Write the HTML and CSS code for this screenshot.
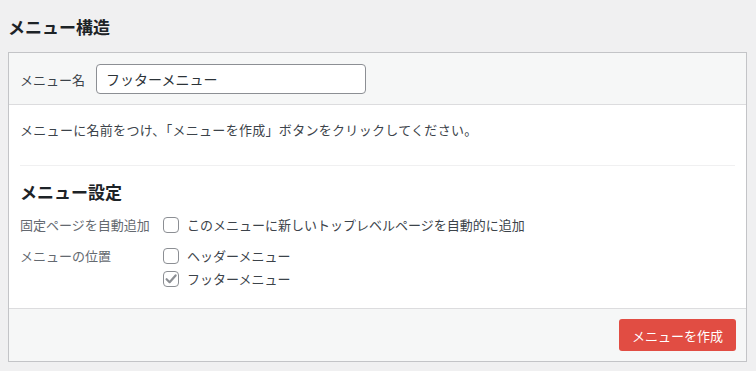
FILE: index.html
```html
<!DOCTYPE html>
<html lang="ja">
<head>
  <meta charset="UTF-8" />
  <title>メニュー構造</title>
  <link rel="stylesheet" href="styles.css">
</head>
<body>
  <h1 class="page-title">メニュー構造</h1>
  <div class="menu-box">
    <div class="menu-head">
      <label for="menu-name" class="name-label">メニュー名</label>
      <input type="text" id="menu-name" class="name-input" value="フッターメニュー">
    </div>
    <div class="menu-body">
      <p class="help">メニューに名前をつけ、「メニューを作成」ボタンをクリックしてください。</p>
      <div class="divider"></div>
      <h2 class="settings-title">メニュー設定</h2>
      <div class="setting-row">
        <div class="setting-label">固定ページを自動追加</div>
        <div class="setting-options">
          <label class="opt"><span class="box"></span>このメニューに新しいトップレベルページを自動的に追加</label>
        </div>
      </div>
      <div class="setting-row second">
        <div class="setting-label">メニューの位置</div>
        <div class="setting-options">
          <label class="opt"><span class="box"></span>ヘッダーメニュー</label>
          <label class="opt"><span class="box"><svg width="14" height="14" viewBox="0 0 14 14"><path d="M2.6 7.2 L5.6 10.2 L11.6 3.4" fill="none" stroke="#8c8f94" stroke-width="2.2" stroke-linecap="round" stroke-linejoin="round"/></svg></span>フッターメニュー</label>
        </div>
      </div>
    </div>
    <div class="menu-foot">
      <button type="button" class="create-btn">メニューを作成</button>
    </div>
  </div>
</body>
</html>
```

FILE: styles.css
```css
body {
  margin: 8px 9px 8px 8px;
  background: #f0f0f1;
  font-family: "Noto Sans CJK JP", "Noto Sans", sans-serif;
  font-size: 13px;
  color: #3c434a;
}
.page-title {
  margin: 0 0 13px;
  padding-top: 7px;
  font-size: 17px;
  line-height: 24px;
  font-weight: bold;
  color: #1d2327;
}
.menu-box {
  border: 1px solid #c3c4c7;
  background: #fff;
}
.menu-head {
  display: flex;
  align-items: center;
  gap: 11px;
  padding: 11px 11px 10px;
  background: #f6f7f7;
  border-bottom: 1px solid #dcdcde;
}
.name-label { color: #3c434a; }
.name-input {
  box-sizing: border-box;
  width: 270px;
  height: 30px;
  padding: 0 9px;
  border: 1px solid #8c8f94;
  border-radius: 4px;
  font-family: inherit;
  font-size: 14px;
  color: #2c3338;
  background: #fff;
}
.menu-body { padding: 15px 11px 18px; }
.help { margin: 0; line-height: 20px; letter-spacing: 0.3px; }
.divider {
  margin-top: 25px;
  border-top: 1px solid #f0f0f1;
}
.settings-title {
  margin: 14px 0 9px;
  font-size: 17px;
  line-height: 24px;
  color: #1d2327;
}
.setting-row { display: flex; }
.setting-row.second { margin-top: 8px; }
.setting-label {
  width: 143px;
  line-height: 23px;
  color: #646970;
}
.setting-options { display: flex; flex-direction: column; }
.opt {
  display: flex;
  align-items: center;
  height: 23px;
}
.box {
  box-sizing: border-box;
  width: 16px;
  height: 16px;
  margin-right: 8px;
  border: 1px solid #8c8f94;
  border-radius: 4px;
  background: #fff;
  display: flex;
  align-items: center;
  justify-content: center;
}
.menu-foot {
  display: flex;
  justify-content: flex-end;
  padding: 10px 10px 10px;
  background: #f6f7f7;
  border-top: 1px solid #dcdcde;
}
.create-btn {
  width: 117px;
  height: 32px;
  border: none;
  border-radius: 3px;
  background: #e14d43;
  color: #fff;
  font-family: inherit;
  font-size: 13px;
  cursor: pointer;
}
```
